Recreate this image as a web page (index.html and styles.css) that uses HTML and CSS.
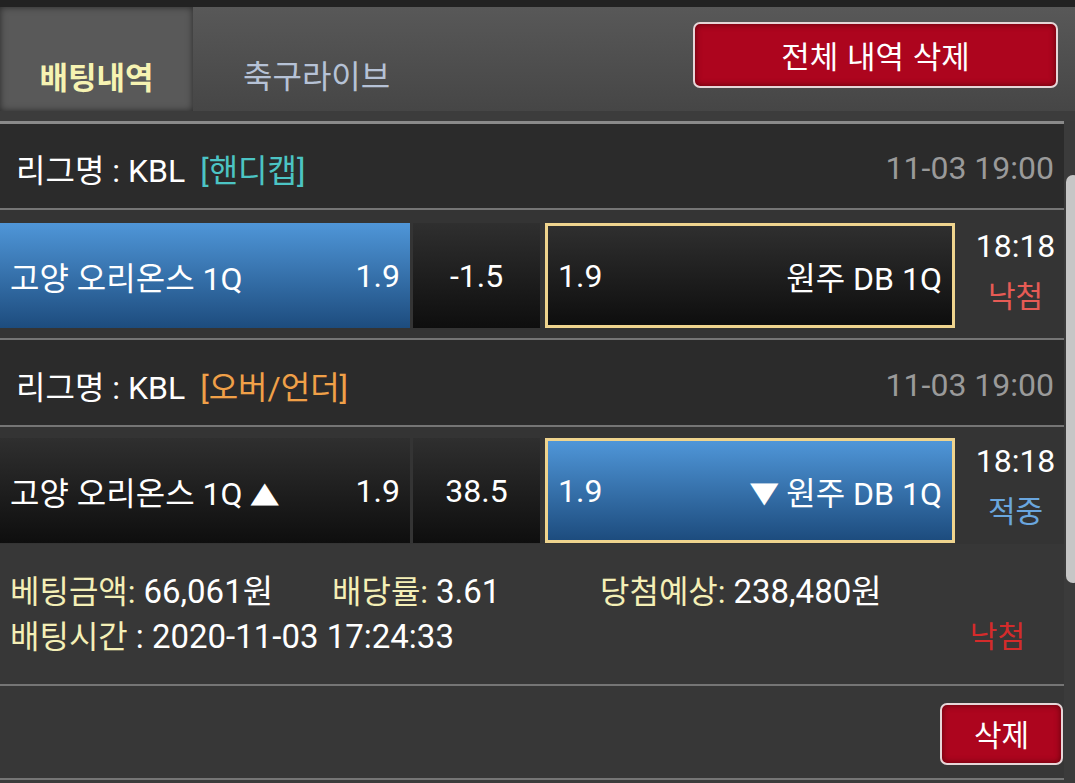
FILE: index.html
```html
<!DOCTYPE html>
<html lang="ko">
<head>
<meta charset="utf-8">
<title>배팅내역</title>
<link rel="stylesheet" href="styles.css">
</head>
<body>
<div class="app">
  <div class="topbar"></div>
  <header class="tabs">
    <div class="tab tab-active">배팅내역</div>
    <div class="tab">축구라이브</div>
    <button class="btn btn-wide">전체 내역 삭제</button>
  </header>
  <div class="band"></div>
  <main class="list">
    <div class="league first">
      <div class="league-name">리그명 : KBL <span class="tag tag-hdp">[핸디캡]</span></div>
      <div class="league-date">11-03 19:00</div>
    </div>
    <div class="match">
      <div class="cell cell-blue"><span>고양 오리온스 1Q</span><span>1.9</span></div>
      <div class="cell cell-dark cell-mid">-1.5</div>
      <div class="cell cell-dark cell-pick"><span>1.9</span><span>원주 DB 1Q</span></div>
      <div class="result">
        <div class="result-time">18:18</div>
        <div class="result-lose">낙첨</div>
      </div>
    </div>
    <div class="league">
      <div class="league-name">리그명 : KBL <span class="tag tag-ou">[오버/언더]</span></div>
      <div class="league-date">11-03 19:00</div>
    </div>
    <div class="match match-last">
      <div class="cell cell-dark"><span>고양 오리온스 1Q <span class="tri">▲</span></span><span>1.9</span></div>
      <div class="cell cell-dark cell-mid">38.5</div>
      <div class="cell cell-blue cell-pick"><span>1.9</span><span><span class="tri">▼</span> 원주 DB 1Q</span></div>
      <div class="result">
        <div class="result-time">18:18</div>
        <div class="result-win">적중</div>
      </div>
    </div>
    <div class="summary">
      <div class="summary-row">
        <div class="s-item s-amount"><span class="label">베팅금액:</span> <span class="val">66,061원</span></div>
        <div class="s-item s-rate"><span class="label">배당률:</span> <span class="val">3.61</span></div>
        <div class="s-item"><span class="label">당첨예상:</span> <span class="val">238,480원</span></div>
      </div>
      <div class="summary-row summary-row2">
        <div class="s-item"><span class="label">배팅시간</span> <span class="val">: 2020-11-03 17:24:33</span></div>
        <div class="s-status">낙첨</div>
      </div>
    </div>
    <div class="actions">
      <button class="btn btn-small">삭제</button>
    </div>
  </main>
  <div class="scrollbar"></div>
</div>
</body>
</html>
```

FILE: styles.css
```css
* { box-sizing: border-box; }
html, body { margin: 0; padding: 0; }
body {
  background: #3b3b3b;
  font-family: Roboto, "Noto Sans CJK KR", sans-serif;
  color: #fff;
  width: 1075px;
  height: 783px;
  overflow: hidden;
}
.app { position: relative; width: 1075px; height: 783px; }
.topbar { height: 7px; background: #222; }
.tabs {
  height: 104px;
  display: flex;
  align-items: stretch;
  background: linear-gradient(#585858, #464646);
}
.tab {
  display: flex;
  align-items: center;
  padding-top: 30px;
  font-family: "Noto Sans CJK KR", sans-serif;
  font-size: 32px;
  color: #b6c2d6;
  padding-left: 50px;
}
.tab-active {
  width: 193px;
  justify-content: center;
  padding-left: 0;
  padding-top: 32px;
  font-size: 31px;
  background: #595959;
  color: #f6f3b2;
  font-weight: 700;
  box-shadow: inset 0 0 7px rgba(0,0,0,.55);
}
.btn {
  font-family: "Noto Sans CJK KR", sans-serif;
  color: #fff;
  background: #ad051e;
  border: 2px solid #e6d6d8;
  border-radius: 7px;
  box-shadow: inset 0 0 6px rgba(60,0,0,.7);
  cursor: pointer;
}
.btn-wide {
  margin: 15px 17px 0 auto;
  width: 365px;
  height: 66px;
  font-size: 31px;
  padding: 0 0 2px;
}
.band { height: 10px; background: #3c3c3c; }
.list {
  width: 1064px;
  background: #353535;
}
.league {
  height: 87px;
  border-top: 2px solid #757575;
  background: #2b2b2b;
  display: flex;
  align-items: center;
  justify-content: space-between;
  padding: 4px 10px 0 16px;
  font-size: 32px;
}
.league.first { border-top: 3px solid #8a8a8a; height: 87px; }
.league-date { color: #9a9a9a; font-size: 32px; }
.tag { margin-left: 7px; }
.tag-hdp { color: #4cc4c4; }
.tag-ou { color: #f0a048; }
.match {
  height: 130px;
  border-top: 2px solid #757575;
  background: #343434;
  display: flex;
  padding: 13px 0 10px;
  font-size: 32px;
}
.match-last { height: 119px; padding: 11px 0 1px; }
.cell {
  display: flex;
  align-items: center;
  justify-content: space-between;
  padding: 0 10px 0 10px;
  white-space: nowrap;
}
.cell:first-child { width: 410px; }
.cell-blue { background: linear-gradient(#4f96d8, #1d4c7e); }
.cell-dark { background: linear-gradient(#2f2f2f, #0e0e0e); }
.cell-mid { width: 127px; margin-left: 3px; justify-content: center; }
.cell-pick {
  width: 410px;
  margin-left: 5px;
  border: 3px solid #efd48e;
  padding: 0 10px;
}
.tri {
  display: inline-block;
  font-family: "DejaVu Sans", sans-serif;
  font-size: 37px;
  transform: scaleY(0.78);
}
.result {
  flex: 1;
  display: flex;
  flex-direction: column;
  align-items: center;
  justify-content: center;
  padding-left: 12px;
  line-height: 48px;
  padding-bottom: 12px;
}
.result-lose { color: #e65b55; font-family: "Noto Sans CJK KR", sans-serif; font-size: 30px; }
.result-win { color: #6aa6de; font-family: "Noto Sans CJK KR", sans-serif; font-size: 30px; }
.summary {
  height: 140px;
  background: #373737;
  padding: 22px 39px 0 10px;
  font-size: 32px;
}
.val { font-size: 33px; }
.summary-row { display: flex; height: 45px; align-items: center; }
.s-amount { width: 322px; }
.s-rate { width: 268px; }
.label { color: #f4efb6; }
.summary-row2 { justify-content: space-between; }
.s-status { color: #d42b2b; font-family: "Noto Sans CJK KR", sans-serif; font-size: 30px; }
.actions {
  height: 96px;
  border-top: 2px solid #757575;
  border-bottom: 2px solid #757575;
  background: #373737;
  display: flex;
  justify-content: flex-end;
  padding-top: 17px;
}
.btn-small {
  width: 123px;
  height: 62px;
  font-size: 30px;
  margin-right: 1px;
  padding: 0 0 2px;
}
.scrollbar {
  position: absolute;
  left: 1066px;
  top: 175px;
  width: 14px;
  height: 408px;
  background: #c6c6c6;
  border-radius: 10px;
}
```
